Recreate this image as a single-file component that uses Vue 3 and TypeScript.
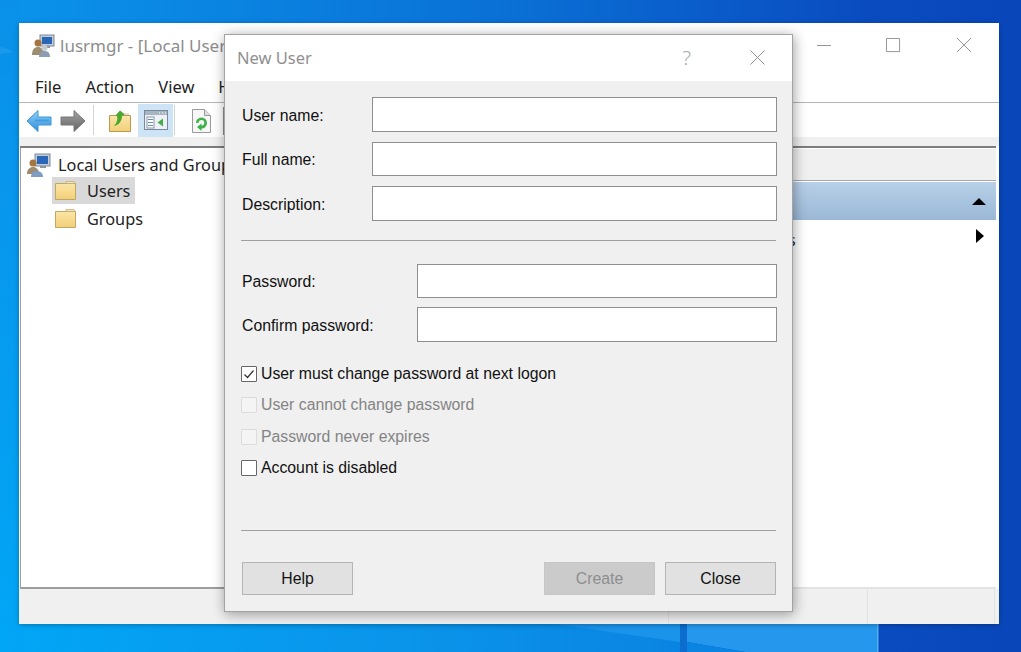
<script setup lang="ts">
const menus: string[] = ['File', 'Action', 'View', 'Help']
const topFields: { label: string }[] = [{ label: 'User name:' }, { label: 'Full name:' }, { label: 'Description:' }]
const pwFields: { label: string }[] = [{ label: 'Password:' }, { label: 'Confirm password:' }]
const checks: { label: string; checked: boolean; disabled: boolean }[] = [
  { label: 'User must change password at next logon', checked: true, disabled: false },
  { label: 'User cannot change password', checked: false, disabled: true },
  { label: 'Password never expires', checked: false, disabled: true },
  { label: 'Account is disabled', checked: false, disabled: false },
]
</script>

<template>
  <div class="desktop">
    <svg class="wallpaper" viewBox="0 0 1021 652" preserveAspectRatio="none">
      <defs>
        <linearGradient id="wall" x1="0" y1="0" x2="1" y2="0">
          <stop offset="0" stop-color="#0a93ea" />
          <stop offset="0.5" stop-color="#0a70d6" />
          <stop offset="0.85" stop-color="#0a4cc0" />
          <stop offset="1" stop-color="#0846ba" />
        </linearGradient>
        <linearGradient id="leftEdge" x1="0" y1="0" x2="0" y2="1">
          <stop offset="0" stop-color="#0a90e8" />
          <stop offset="1" stop-color="#02a6f6" />
        </linearGradient>
        <linearGradient id="bottomEdge" x1="0" y1="0" x2="1" y2="0">
          <stop offset="0" stop-color="#02a6f6" />
          <stop offset="0.6" stop-color="#0a94ea" />
          <stop offset="1" stop-color="#0a84e2" />
        </linearGradient>
        <linearGradient id="arrowBlue" x1="0" y1="0" x2="0" y2="1">
          <stop offset="0" stop-color="#8fd0f7" />
          <stop offset="1" stop-color="#2f8fdc" />
        </linearGradient>
        <linearGradient id="arrowGrey" x1="0" y1="0" x2="0" y2="1">
          <stop offset="0" stop-color="#a4a4a4" />
          <stop offset="1" stop-color="#636363" />
        </linearGradient>
        <linearGradient id="folderFill" x1="0" y1="0" x2="0" y2="1">
          <stop offset="0" stop-color="#fbe6a6" />
          <stop offset="1" stop-color="#f2cf78" />
        </linearGradient>
      </defs>
      <rect width="1021" height="652" fill="url(#wall)" />
      <rect width="19" height="652" fill="url(#leftEdge)" />
      <rect y="624" width="680" height="28" fill="url(#bottomEdge)" />
      <polygon points="555,624 680,624 680,642" fill="#1a93ea" />
      <rect x="680" y="624" width="7" height="28" fill="#0d6dce" />
      <polygon points="687,624 877,624 877,652 745,652 687,642" fill="#2598ee" />
      <polygon points="687,642 745,652 687,652" fill="#0a84e2" />
      <rect x="877" y="624" width="1.500" height="28" fill="#4fb0f2" />
      <polygon points="0,46 14,52 0,54" fill="#2ba2ee" opacity=".5" />
    </svg>

    <section class="window">
      <div class="titlebar">
        <svg class="app-icon" viewBox="0 0 24 24">
          <rect x="9" y="1" width="14" height="11" fill="#c3ccd8" stroke="#7c8798" />
          <rect x="11" y="3" width="10" height="7" fill="#2a66b8" />
          <rect x="14" y="12" width="5" height="2" fill="#8b95a3" />
          <circle cx="7" cy="9" r="3.500" fill="#a5753f" />
          <path d="M1 21c0-6 3-8 6-8s6 2 6 8z" fill="#9d8c6e" />
          <circle cx="13.500" cy="14" r="3" fill="#c7ccd2" />
          <path d="M8 23c0-4 2-6 5.500-6s5.500 2 5.500 6z" fill="#8c9cb3" />
        </svg>
        <span class="app-title">lusrmgr - [Local Users and Groups (Local)]</span>
        <div class="win-controls">
          <span class="ctl"><svg viewBox="0 0 16 16"><path d="M0 8h15" /></svg></span>
          <span class="ctl"><svg viewBox="0 0 16 16"><path d="M.5.500h14v14H.5z" /></svg></span>
          <span class="ctl"><svg viewBox="0 0 16 16"><path d="M0 0l15 15M15 0L0 15" /></svg></span>
        </div>
      </div>
      <nav class="menubar">
        <span v-for="m in menus" :key="m" class="menu">{{ m }}</span>
      </nav>
      <div class="toolbar">
        <svg class="tool" viewBox="0 0 26 24">
          <path d="M1 12L12 1.500v6.500h13v8H12v6.500z" fill="url(#arrowBlue)" stroke="#3f94d8" stroke-linejoin="round" />
          <path d="M9 10.500h14v2H9z" fill="#2f8fdc" opacity=".6" />
        </svg>
        <svg class="tool" viewBox="0 0 26 24">
          <path d="M25 12L14 1.500v6.500H1v8h13v6.500z" fill="url(#arrowGrey)" stroke="#777" stroke-linejoin="round" />
        </svg>
        <i class="tool-sep"></i>
        <svg class="tool up" viewBox="0 0 22 22">
          <path d="M.5 5.500h21v16H.5z" fill="url(#folderFill)" stroke="#b99a52" />
          <path d="M5 16C8 13 9 9 8 6L6 6l5-5.500 5 4-3 1.500c0 5-3 9-8 10z" fill="#4aa82f" />
          <path d="M15 3h5v2h-4z" fill="#e3e0d4" />
        </svg>
        <span class="tool-active">
          <svg viewBox="0 0 24 20">
            <rect x=".5" y=".5" width="23" height="19" fill="#eef1f5" stroke="#7a889c" />
            <rect x="1" y="1" width="22" height="4" fill="#a9b4c2" />
            <path d="M15 3h1M18 3h1M21 3h1" stroke="#fff" />
            <rect x="3" y="7" width="7" height="11" fill="#fff" stroke="#8a97a8" />
            <path d="M4 9.500h5M4 12.500h5M4 15.500h5" stroke="#6d8cb8" />
            <path d="M19 8.500v8l-5.500-4z" fill="#45ad4a" />
          </svg>
        </span>
        <i class="tool-sep tight"></i>
        <svg class="tool doc" viewBox="0 0 19 24">
          <path d="M.5.500h12l6 6v17H.5z" fill="#f7f7f7" stroke="#9a9a9a" />
          <path d="M12.500.5v6h6" fill="#e0e0e0" stroke="#9a9a9a" />
          <path d="M4 14a5.500 5.500 0 1 1 5.500 5.500v2.500L5 18l4.500-3.500v2a2.800 2.800 0 1 0-2.800-2.800z" fill="#3fb04a" />
        </svg>
        <i class="tool-stub"></i>
      </div>
      <div class="band"></div>

      <div class="main">
        <div class="tree">
          <div class="node root">
            <svg class="node-icon" viewBox="0 0 24 24">
              <rect x="8" y="1" width="15" height="12" fill="#c3ccd8" stroke="#7c8798" />
              <rect x="10" y="3" width="11" height="8" fill="#2a66b8" />
              <rect x="13" y="13" width="6" height="2" fill="#8b95a3" />
              <circle cx="6" cy="10" r="3.500" fill="#a5753f" />
              <path d="M0 21c0-5 3-7 6-7s6 2 6 7z" fill="#9d8c6e" />
              <path d="M4 24c0-4 3-6 6-6s6 2 6 6z" fill="#7f9cc4" />
            </svg>
            <span>Local Users and Groups</span>
          </div>
          <div class="node child selected">
            <svg class="folder" viewBox="0 0 21 19">
              <path d="M.5 2.500h20v16H.5z" fill="url(#folderFill)" stroke="#c2a760" />
              <path d="M11 .5h8l1.500 2H11z" fill="#e9e3cf" stroke="#c2a760" stroke-width=".7" />
            </svg>
            <span>Users</span>
          </div>
          <div class="node child next">
            <svg class="folder" viewBox="0 0 21 19">
              <path d="M.5 2.500h20v16H.5z" fill="url(#folderFill)" stroke="#c2a760" />
              <path d="M11 .5h8l1.500 2H11z" fill="#e9e3cf" stroke="#c2a760" stroke-width=".7" />
            </svg>
            <span>Groups</span>
          </div>
        </div>
        <aside class="actions">
          <div class="actions-head">Actions</div>
          <div class="actions-bar"><b>Users</b><i class="tri-up"></i></div>
          <div class="actions-row"><span>More Actions</span><i class="tri-right"></i></div>
        </aside>
      </div>

      <footer class="statusbar">
        <span class="status-cell wide"></span>
        <span class="status-cell mid"></span>
        <span class="status-cell"></span>
      </footer>
    </section>

    <section class="dialog">
      <header class="dlg-title">
        <span class="dlg-name">New User</span>
        <span class="dlg-help">?</span>
        <svg class="dlg-x" viewBox="0 0 16 16"><path d="M.5.500l15 15M15.500.500l-15 15" /></svg>
      </header>
      <div class="dlg-body">
        <div class="fields">
          <label v-for="f in topFields" :key="f.label" class="field">
            <span>{{ f.label }}</span>
            <input type="text" />
          </label>
        </div>
        <hr class="rule first" />
        <div class="fields pw">
          <label v-for="f in pwFields" :key="f.label" class="field">
            <span>{{ f.label }}</span>
            <input type="password" />
          </label>
        </div>
        <ul class="checks">
          <li v-for="c in checks" :key="c.label" :class="{ off: c.disabled }">
            <span class="box">
              <svg v-if="c.checked" viewBox="0 0 14 14"><path d="M2.500 7.500l3 3 6-7" /></svg>
            </span>
            {{ c.label }}
          </li>
        </ul>
        <hr class="rule second" />
        <div class="buttons">
          <button type="button">Help</button>
          <span class="spacer"></span>
          <button type="button" class="disabled">Create</button>
          <button type="button">Close</button>
        </div>
      </div>
    </section>
  </div>
</template>

<style>
html, body { margin: 0; padding: 0; overflow: hidden; }
</style>

<style scoped>
.desktop {
  position: relative;
  width: 1021px;
  height: 652px;
  overflow: hidden;
  font-family: "Noto Sans", "Open Sans", sans-serif;
  color: #1a1a1a;
}
.wallpaper { position: absolute; inset: 0; width: 100%; height: 100%; }

.window {
  position: absolute;
  left: 19px;
  top: 23px;
  width: 980px;
  height: 601px;
  background: #fff;
  display: flex;
  flex-direction: column;
  box-shadow: 0 1px 5px rgba(0, 0, 0, .28);
}
.titlebar { height: 45px; display: flex; align-items: center; padding-left: 12px; flex: none; }
.app-icon { width: 24px; height: 24px; margin-right: 5px; }
.app-title { font-size: 17px; color: #8d8d8d; white-space: nowrap; }
.win-controls { margin-left: auto; margin-right: -1px; display: flex; }
.ctl { width: 71px; height: 45px; display: flex; align-items: center; justify-content: center; box-sizing: border-box; }
.ctl:first-child { padding-left: 4px; }
.ctl svg { width: 15px; height: 15px; fill: none; stroke: #8f8f8f; stroke-width: 1; }

.menubar { height: 35px; display: flex; align-items: center; padding: 3px 0 0 16px; box-sizing: border-box; gap: 24px; border-bottom: 1px solid #b5b5b5; flex: none; }
.menu { font-size: 16.500px; color: #222; }

.toolbar { height: 34px; flex: none; display: flex; align-items: center; padding: 2px 0 0 7px; box-sizing: border-box; }
.tool { width: 26px; height: 24px; flex: none; }
.tool + .tool { margin-left: 8px; }
.tool-sep { width: 1px; height: 30px; background: #d4d4d4; margin: -2px 15px 0 7px; flex: none; }
.tool-sep.tight { margin: -2px 17px 0 1px; }
.up { width: 22px; height: 22px; margin-left: 0; }
.tool-active {
  width: 35px; height: 33px; margin: -2px 0 0 7px; flex: none;
  background: #cde4f7; display: flex; align-items: center; justify-content: center;
}
.tool-active svg { width: 24px; height: 20px; }
.doc { width: 19px; height: 24px; }
.tool-stub { width: 3px; height: 28px; background: #8f8f8f; margin-left: 12px; flex: none; }

.band { height: 9px; background: #f0f0f0; flex: none; }

.main { flex: 1; display: flex; min-height: 0; border-top: 2px solid #7d7d7d; margin-right: 3px; margin-left: 1px; box-sizing: border-box; }
.tree {
  flex: 1; min-width: 0; padding: 4px 0 0 6px; border-left: 1px solid #9d9d9d; border-bottom: 2px solid #9d9d9d;
  font-size: 16.300px; color: #222;
}
.node { display: flex; align-items: center; white-space: nowrap; }
.root { height: 25px; }
.node-icon { width: 24px; height: 24px; margin-right: 7px; flex: none; }
.child { height: 27px; margin-left: 25px; padding: 0 5px 0 3px; width: fit-content; gap: 11px; }
.child.next { margin-top: 1px; }
.selected { background: #d9d9d9; }
.folder { width: 21px; height: 19px; flex: none; }

.actions { width: 316px; flex: none; border-bottom: 2px solid #e3e3e3; font-size: 16px; color: #222; }
.actions-head { height: 31px; background: #f0f0f0; border-bottom: 1px solid #a9a9a9; padding-left: 17px; line-height: 31px; margin-top: 1px; }
.actions-bar {
  height: 38px; margin-top: 1px; padding: 0 10px 0 17px; display: flex; align-items: center; justify-content: space-between;
  background: linear-gradient(#b8d0e8, #9ab8d6);
}
.actions-row { height: 35px; padding: 4px 12px 0 17px; box-sizing: border-box; display: flex; align-items: center; justify-content: space-between; }
.tri-up { width: 0; height: 0; border-left: 7px solid transparent; border-right: 7px solid transparent; border-bottom: 7px solid #000; }
.tri-right { width: 0; height: 0; margin-bottom: 7px; border-top: 7px solid transparent; border-bottom: 7px solid transparent; border-left: 8px solid #000; }

.statusbar { height: 35px; flex: none; background: #f0f0f0; display: flex; padding-right: 4px; }
.status-cell { width: 127px; border-right: 1px solid #e2e2e2; }
.status-cell.wide { width: 650px; }
.status-cell.mid { width: 199px; margin-right: -1px; }

.dialog {
  position: absolute;
  left: 224px;
  top: 34px;
  width: 569px;
  height: 578px;
  box-sizing: border-box;
  border: 1px solid #a3a3a3;
  background: #f0f0f0;
  box-shadow: 1px 2px 12px rgba(0, 0, 0, .38);
  font-family: "Liberation Sans", Arial, sans-serif;
  font-size: 15.800px;
  color: #111;
}
.dlg-title { height: 46px; background: #fff; display: flex; align-items: center; padding: 0 27px 2px 12px; box-sizing: border-box; }
.dlg-name { font-family: "Noto Sans", sans-serif; font-size: 16.500px; color: #909090; }
.dlg-help { margin-left: auto; margin-right: 59px; font-family: "Noto Sans", sans-serif; font-size: 20px; font-weight: 300; color: #a8a8a8; }
.dlg-x { width: 15px; height: 15px; fill: none; stroke: #8a8a8a; stroke-width: 1; }

.dlg-body { padding: 16px 15px 0 17px; }
.fields { display: flex; flex-direction: column; gap: 10px; }
.field { display: grid; grid-template-columns: 130px 1fr; align-items: center; height: 34.500px; }
.field span { padding-top: 3px; }
.field input { height: 100%; width: 100%; box-sizing: border-box; border: 1px solid #8f8f8f; background: #fff; outline: none; padding: 0 4px; margin: 0; border-radius: 0; }
.pw { gap: 9px; }
.pw .field { grid-template-columns: 175px 1fr; }

.rule { height: 1px; border: 0; margin: 0; background: #a0a0a0; width: 535px; margin-left: -1px; }
.rule.first { margin-top: 19px; margin-bottom: 23px; }
.rule.second { margin-top: 46px; margin-bottom: 31px; }

.checks { list-style: none; margin: 17px 0 0; padding: 0; }
.checks li { height: 31.300px; display: flex; align-items: center; gap: 4px; white-space: nowrap; }
.checks li.off { color: #848484; }
.box { width: 16px; height: 16px; margin-left: -1px; box-sizing: border-box; border: 1px solid #666; border-radius: 1px; background: #fff; display: flex; flex: none; }
.box svg { width: 100%; height: 100%; fill: none; stroke: #333; stroke-width: 1.200; }
.off .box { border-color: #dcdcdc; background: #f4f4f4; }

.buttons { display: flex; gap: 10px; margin-right: 1px; }
.spacer { flex: 1; }
.buttons button {
  width: 111px; height: 33px; box-sizing: border-box; margin: 0; border: 1px solid #b4b4b4; background: #e1e1e1;
  font: inherit; color: #111; padding: 1px 0 0; border-radius: 0;
}
.buttons button.disabled { background: #cbcbcb; border-color: #c6c6c6; color: #8e8e8e; }
</style>
